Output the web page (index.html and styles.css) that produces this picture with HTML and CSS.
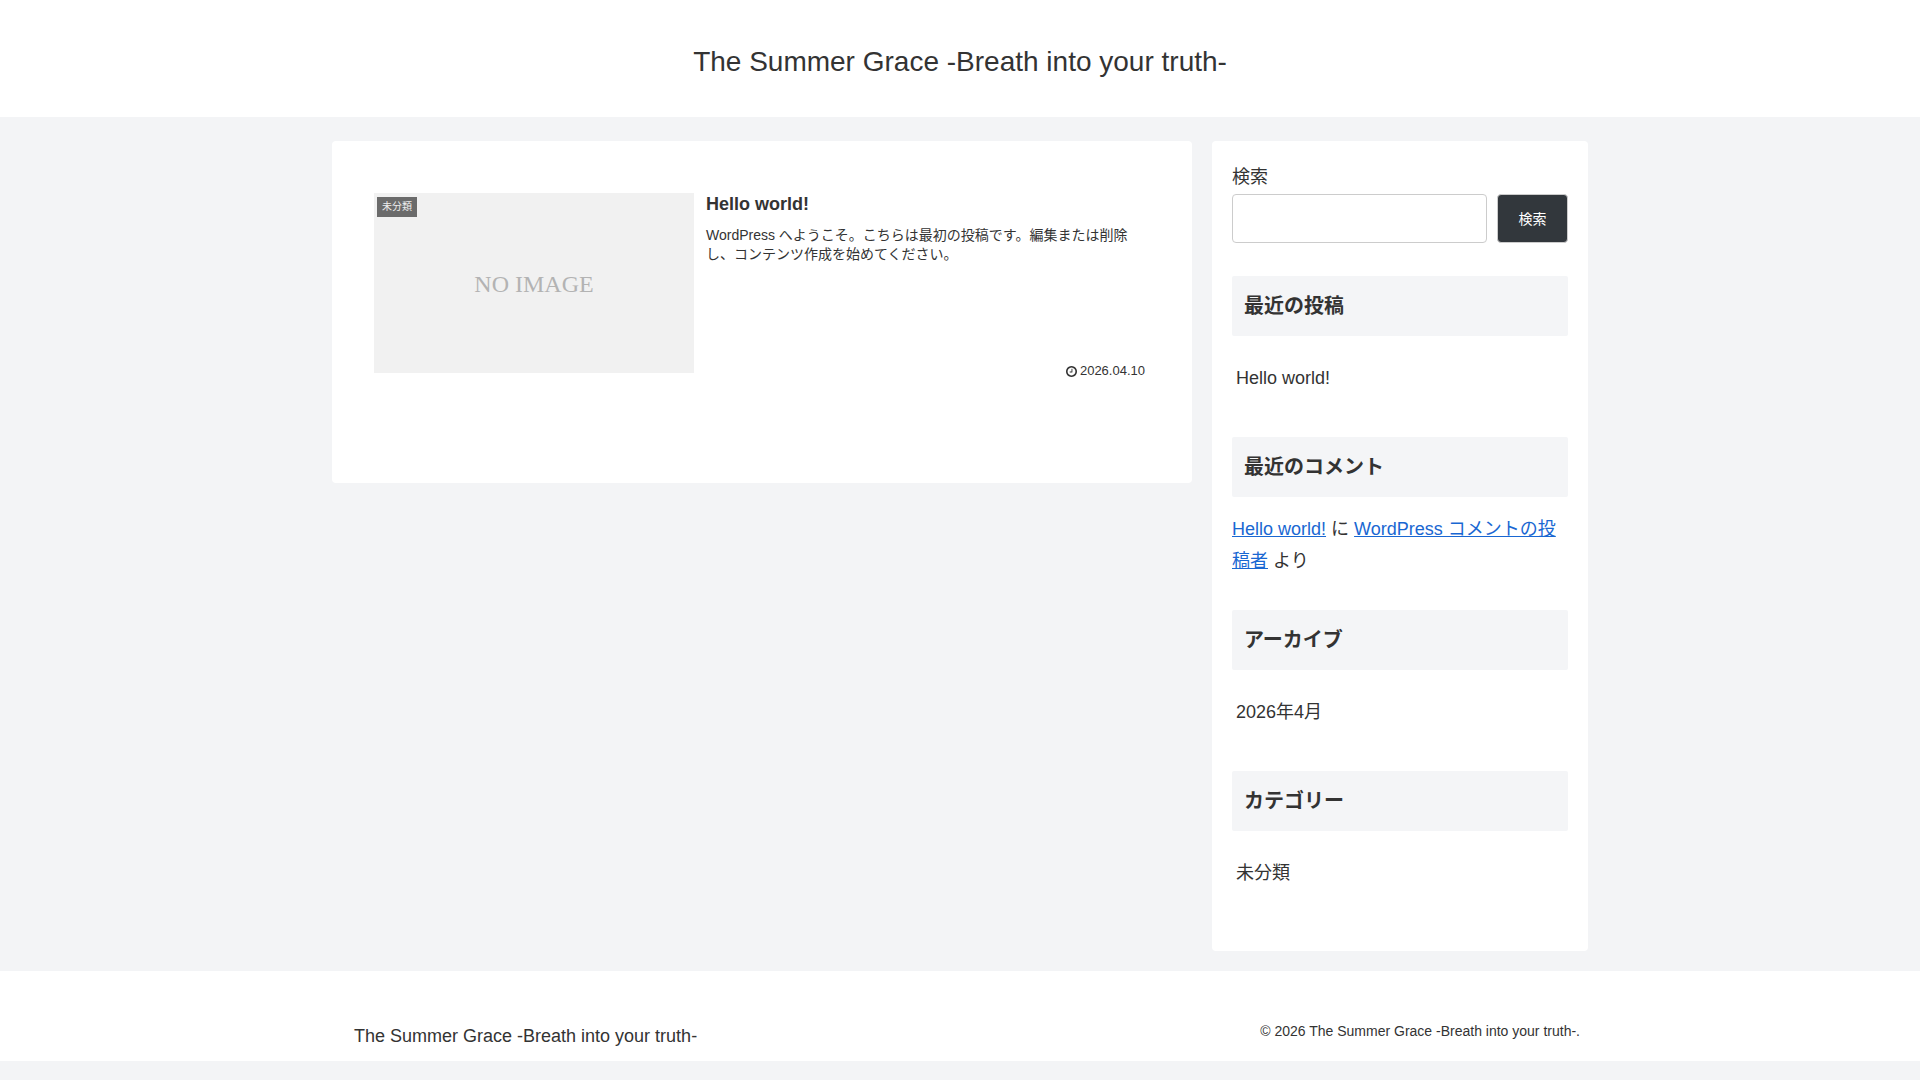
FILE: index.html
```
<!DOCTYPE html>
<html lang="ja">

<head>
    <meta charset="UTF-8">
    <meta name="viewport" content="width=device-width, initial-scale=1.0">
    <title>The Summer Grace -Breath into your truth-</title>

    <link rel="stylesheet" href="styles.css">
</head>

<body>
    <header class="header">
        <h1 class="site-name"><a href="#">The Summer Grace -Breath into your truth-</a></h1>
    </header>

    <div class="content">
        <main class="main">
            <a class="entry-card" href="#">
                <div class="thumb">
                    <span class="no-image">NO IMAGE</span>
                    <span class="cat-label">未分類</span>
                </div>
                <div class="entry-body">
                    <h2 class="entry-title">Hello world!</h2>
                    <p class="entry-snippet">WordPress へようこそ。こちらは最初の投稿です。編集または削除し、コンテンツ作成を始めてください。</p>
                    <div class="entry-date">
                        <svg class="icon-clock" viewBox="0 128 1536 1536" aria-hidden="true">
                            <path d="M896 544v448q0 14-9 23t-23 9H544q-14 0-23-9t-9-23v-64q0-14 9-23t23-9h224V544q0-14 9-23t23-9h64q14 0 23 9t9 23zm416 352q0-148-73-273t-198-198-273-73-273 73-198 198-73 273 73 273 198 198 273 73 273-73 198-198 73-273zm224 0q0 209-103 385.5T1153.5 1561 768 1664t-385.5-103T103 1281.5 0 896t103-385.5T382.5 231 768 128t385.5 103T1433 510.5 1536 896z" />
                        </svg>
                        <time datetime="2026-04-10">2026.04.10</time>
                    </div>
                </div>
            </a>
        </main>

        <aside class="sidebar">
            <form class="widget" role="search">
                <label class="search-label" for="search">検索</label>
                <div class="search-row">
                    <input class="search-input" type="search" id="search" name="s">
                    <button class="search-btn" type="submit">検索</button>
                </div>
            </form>

            <section class="widget">
                <h2 class="widget-title">最近の投稿</h2>
                <ul class="widget-list">
                    <li><a href="#">Hello world!</a></li>
                </ul>
            </section>

            <section class="widget">
                <h2 class="widget-title">最近のコメント</h2>
                <p class="comment"><a href="#">Hello world!</a> に <a href="#">WordPress コメントの投稿者</a> より</p>
            </section>

            <section class="widget">
                <h2 class="widget-title">アーカイブ</h2>
                <ul class="widget-list">
                    <li><a href="#">2026年4月</a></li>
                </ul>
            </section>

            <section class="widget">
                <h2 class="widget-title">カテゴリー</h2>
                <ul class="widget-list">
                    <li><a href="#">未分類</a></li>
                </ul>
            </section>
        </aside>
    </div>

    <footer class="footer">
        <div class="footer-in">
            <a class="footer-logo" href="#">The Summer Grace -Breath into your truth-</a>
            <p class="copyright">© 2026 The Summer Grace -Breath into your truth-.</p>
        </div>
    </footer>
</body>

</html>
```

FILE: styles.css
```
* {
    box-sizing: border-box;
}

body {
    margin: 0;
    font-family: "Liberation Sans", "Noto Sans CJK JP", sans-serif;
    font-size: 18px;
    line-height: 32px;
    color: #333;
    background: #f3f4f6;
}

h1,
h2,
p,
ul {
    margin: 0;
    padding: 0;
}

/* header */

.header {
    padding: 37px 16px 30px;
    text-align: center;
    background: #fff;
}

.site-name {
    font-size: 28px;
    font-weight: normal;
    line-height: 50px;
}

.site-name a,
.footer-logo {
    color: #333;
    text-decoration: none;
}

/* columns */

.content {
    display: flex;
    align-items: flex-start;
    gap: 20px;
    max-width: 1256px;
    margin: 24px auto 20px;
}

.main {
    flex: 1;
    min-width: 0;
    padding: 52px 42px 102px;
    background: #fff;
    border-radius: 4px;
}

.sidebar {
    flex: 0 0 376px;
    padding: 20px 20px 19px;
    background: #fff;
    border-radius: 4px;
}

/* entry card */

.entry-card {
    display: flex;
    align-items: flex-start;
    gap: 12px;
    color: #333;
    text-decoration: none;
}

.thumb {
    position: relative;
    display: flex;
    flex: 0 0 320px;
    height: 180px;
    align-items: center;
    justify-content: center;
    background: #f1f1f1;
}

.no-image {
    padding-top: 2px;
    font-family: "Liberation Serif", serif;
    font-size: 24px;
    color: #b3b3b3;
}

.cat-label {
    position: absolute;
    top: 4px;
    left: 3px;
    padding: 0 5px;
    font-size: 10px;
    line-height: 20px;
    color: #eee;
    background: #6b6b6b;
}

.entry-body {
    display: flex;
    flex: 1;
    flex-direction: column;
    min-height: 188px;
}

.entry-title {
    margin-bottom: 11px;
    font-size: 18px;
    line-height: 22px;
}

.entry-snippet {
    font-size: 14px;
    line-height: 19px;
}

.entry-date {
    display: flex;
    align-items: center;
    justify-content: flex-end;
    gap: 3px;
    margin-top: auto;
    padding-right: 5px;
    font-size: 13px;
    line-height: 20px;
}

.icon-clock {
    width: 11px;
    height: 11px;
    fill: currentColor;
}

/* widgets */

.widget {
    margin-bottom: 33px;
}

.widget-title {
    margin-bottom: 16px;
    padding: 12px;
    font-size: 20px;
    line-height: 36px;
    background: #f4f5f7;
    border-radius: 2px;
}

.widget-list {
    list-style: none;
}

.widget-list a {
    display: block;
    padding: 10px 4px;
    color: #333;
    text-decoration: none;
}

.comment a {
    color: #1967d2;
}

.search-label {
    display: block;
    margin-bottom: 1px;
}

.search-row {
    display: flex;
    gap: 10px;
    height: 49px;
}

.search-input {
    flex: 1;
    min-width: 0;
    padding: 0 10px;
    font: inherit;
    background: #fff;
    border: 1px solid #ccc;
    border-radius: 4px;
    appearance: none;
}

.search-btn {
    min-width: 71px;
    padding: 0 20px;
    font-family: inherit;
    font-size: 14px;
    line-height: 20px;
    color: #fff;
    background: #32373c;
    border: 1px solid #ccc;
    border-radius: 4px;
    cursor: pointer;
}

/* footer */

.footer {
    background: #fff;
}

.footer-in {
    display: flex;
    justify-content: space-between;
    max-width: 1256px;
    margin: 0 auto;
    padding: 44px 8px 8px 22px;
}

.footer-logo {
    padding-top: 4px;
    line-height: 34px;
}

.copyright {
    font-size: 14px;
}
```
